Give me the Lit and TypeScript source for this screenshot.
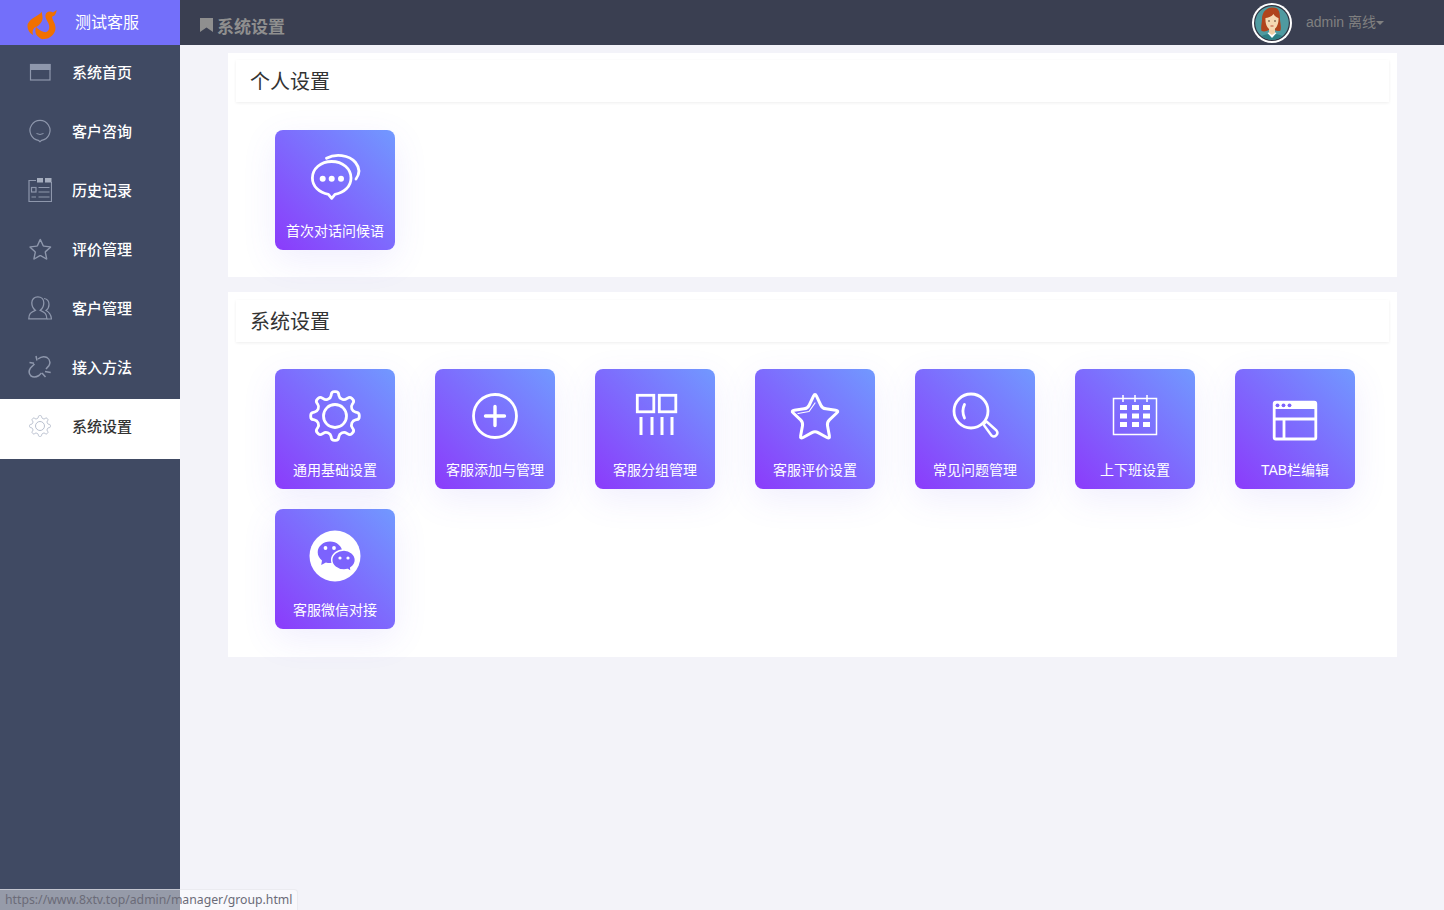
import {LitElement, css, html, svg} from 'lit';
import {customElement} from 'lit/decorators.js';

type Pt = [number, number];

// polygon with rounded corners, r is how far from the corner the curve starts
function roundPoly(pts: Pt[], r: number) {
  let d = '';
  pts.forEach((p, i) => {
    const prev = pts[(i + pts.length - 1) % pts.length];
    const next = pts[(i + 1) % pts.length];
    const toward = (a: Pt, b: Pt): Pt => {
      const len = Math.hypot(b[0] - a[0], b[1] - a[1]);
      const k = Math.min(r, len / 2) / len;
      return [a[0] + (b[0] - a[0]) * k, a[1] + (b[1] - a[1]) * k];
    };
    const s = toward(p, prev);
    const e = toward(p, next);
    d += `${i ? 'L' : 'M'}${s[0].toFixed(2)} ${s[1].toFixed(2)}Q${p[0].toFixed(2)} ${p[1].toFixed(2)} ${e[0].toFixed(2)} ${e[1].toFixed(2)}`;
  });
  return d + 'Z';
}

function gearPath(cx: number, cy: number, outer: number, root: number, teeth: number, r: number) {
  const pts: Pt[] = [];
  const step = (Math.PI * 2) / teeth;
  const at = (a: number, rad: number): Pt => [cx + Math.sin(a) * rad, cy - Math.cos(a) * rad];
  for (let i = 0; i < teeth; i++) {
    const a = i * step;
    pts.push(at(a - step * 0.17, outer), at(a + step * 0.17, outer), at(a + step * 0.3, root), at(a + step * 0.7, root));
  }
  return roundPoly(pts, r);
}

function starPath(cx: number, cy: number, outer: number, inner: number, r: number) {
  const pts: Pt[] = [];
  for (let i = 0; i < 10; i++) {
    const a = (i * Math.PI) / 5;
    const rad = i % 2 ? inner : outer;
    pts.push([cx + Math.sin(a) * rad, cy - Math.cos(a) * rad]);
  }
  return roundPoly(pts, r);
}

const sideIcons = {
  home: svg`<rect x="2.500" y="4.500" width="19.500" height="15.500" fill="none"/><rect x="2" y="4" width="20.500" height="6" fill="currentColor" stroke="none"/>`,
  chat: svg`<path d="M12 22.700l-1.600-1.400a10 10 0 1 1 3.200 0z"/><path d="M8.500 14.500q3.500 2 7 0" stroke-width="1"/>`,
  history: svg`<path d="M8 2.500H1v21h22.500V4"/><rect class="fill" x="9" y="0" width="6" height="4.500"/><rect class="fill" x="17" y="0" width="6.500" height="4.500"/><rect x="3.500" y="9.500" width="4.500" height="4.500"/><path d="M10.500 9.500h11M10.500 14h11M10.500 19h11M3.500 19h4.500"/>`,
  star: svg`<path stroke-width="1.400" d="${starPath(12.300, 13.300, 11, 5.200, 0.4)}"/>`,
  user: svg`<path d="M.8 22.800c0-5 2-6.500 6.500-8.500-2.500-2-3.500-4.500-3.500-7.500C3.800 3.300 6.300.8 9.800.8s6 2.500 6 6c0 3-1 5.500-3.500 7.500 4.500 2 6.500 3.500 6.500 8.500z" stroke-width="1.300"/><path d="M16 2.500c3 .5 5 3 5 6 0 2.500-1 4.500-3 6 3 1.500 5 3.500 5.500 8.500h-4.500"/>`,
  link: svg`<path stroke-width="1.500" d="M10 4c3-2.500 6-3 9-1.500 3 2 3.500 5 2 8l-3 3.500M6.500 9L2.500 13c-2 3-1.500 6 .5 8 2.500 1.500 5.500 1 8-.5l2.500-2.500"/><path stroke-width="1.500" d="M1.500 7.500l4.500.8M8 1l1 4.500M17 16.500l5.700 1M14 18l3.500 4"/>`,
  gear: svg`<path d="${gearPath(12, 12, 10.500, 8, 8, 1)}" stroke-width="1"/><circle cx="12" cy="12" r="4.500" stroke-width="1"/>`,
};

const tileIcons = {
  hello: svg`
    <path d="M26.700 14.500c-11 0-19.300 7.300-19.300 16.500 0 8.500 7 15 16 16.300l3.300 4 3.300-4c9-1.300 16-7.800 16-16.300 0-9.200-8.300-16.500-19.300-16.500z"/>
    <path d="M21.500 11.300C30 6.500 44 7.500 50.500 15.500c4 5 4.500 11 .5 16.500"/>
    <circle class="solid" cx="17.700" cy="31.700" r="3"/><circle class="solid" cx="26.700" cy="31.700" r="3"/><circle class="solid" cx="36" cy="31.700" r="3"/>`,
  gear: svg`<path d="${gearPath(30, 30, 24.500, 18.500, 8, 2.600)}"/><circle cx="30" cy="30" r="11.500"/>`,
  plus: svg`<circle cx="30" cy="30" r="21.500"/><path stroke-width="3.400" d="M20.500 30h19M30 20.500v19"/>`,
  group: svg`
    <g stroke-linecap="butt" stroke-linejoin="miter">
      <rect x="12.300" y="9.300" width="16.500" height="16.500"/><rect x="34.300" y="9.300" width="16.500" height="16.500"/>
      <path stroke-width="3" d="M16 31v18M27 31v18M37 31v18M47 31v18"/>
    </g>`,
  star: svg`
    <path stroke-width="3" d="${starPath(30, 32.500, 25.500, 12.500, 3.500)}"/>
    <path stroke-width="1.200" d="M13 27.500l11-2 6-8.500"/>`,
  search: svg`
    <circle cx="26" cy="25" r="17"/>
    <path d="M19.500 18.500c-2 4-2 9 0 13.500"/>
    <path stroke-width="2.400" d="M38.500 38.500l3-3 10 9a3.500 3.500 0 0 1-.3 4.800 3.500 3.500 0 0 1-4.700.2z"/>`,
  calendar: svg`
    <rect stroke-width="1.500" stroke-linejoin="miter" x="8.500" y="12.500" width="43" height="36"/>
    <path stroke-width="1.500" stroke-linecap="butt" d="M18 9v7M30 9v7M42 9v7"/>
    ${[19, 27.5, 36].map(y => [15, 27, 38].map(x => svg`<rect class="solid" x="${x}" y="${y}" width="7" height="5"/>`))}`,
  tab: svg`
    <rect x="9.200" y="16.200" width="41.600" height="36.800" rx="1.500"/>
    <path class="solid" d="M9 16.500a1.500 1.500 0 0 1 1.500-1.500h39a1.500 1.500 0 0 1 1.500 1.500v6.500H9z"/>
    <circle class="tint" cx="12.500" cy="19.300" r="1.900"/><circle class="tint" cx="18.500" cy="19.300" r="1.900"/><circle class="tint" cx="24.500" cy="19.300" r="1.900"/>
    <path stroke-linecap="butt" d="M9 33h42M19 33v20"/>`,
  wechat: svg`
    <circle class="solid" cx="30" cy="30" r="25.500"/>
    <path class="tint" d="M25 15.500c-6.800 0-12.300 4.800-12.300 10.800 0 3.300 1.700 6.200 4.300 8.200l-.8 4.500 4.700-2.500c1.300.4 2.700.6 4.100.6 6.800 0 12.300-4.800 12.300-10.800S31.800 15.500 25 15.500z"/>
    <circle class="solid" cx="20.500" cy="22" r="1.900"/><circle class="solid" cx="29" cy="22" r="1.900"/>
    <path class="tint-line" d="M39 24c-6.800 0-12.300 4.400-12.300 10s5.500 10 12.300 10c1.200 0 2.400-.1 3.500-.5l3.800 2.300-.6-3.800c2.900-1.900 4.700-4.800 4.700-8 0-5.600-5.600-10-11.400-10z"/>
    <circle class="solid" cx="35" cy="32" r="1.600"/><circle class="solid" cx="43" cy="32" r="1.600"/>`,
};

const menu: {label: string; icon: keyof typeof sideIcons; active?: boolean}[] = [
  {label: '系统首页', icon: 'home'},
  {label: '客户咨询', icon: 'chat'},
  {label: '历史记录', icon: 'history'},
  {label: '评价管理', icon: 'star'},
  {label: '客户管理', icon: 'user'},
  {label: '接入方法', icon: 'link'},
  {label: '系统设置', icon: 'gear', active: true},
];

const personal: {label: string; icon: keyof typeof tileIcons}[] = [
  {label: '首次对话问候语', icon: 'hello'},
];

const system: {label: string; icon: keyof typeof tileIcons}[] = [
  {label: '通用基础设置', icon: 'gear'},
  {label: '客服添加与管理', icon: 'plus'},
  {label: '客服分组管理', icon: 'group'},
  {label: '客服评价设置', icon: 'star'},
  {label: '常见问题管理', icon: 'search'},
  {label: '上下班设置', icon: 'calendar'},
  {label: 'TAB栏编辑', icon: 'tab'},
  {label: '客服微信对接', icon: 'wechat'},
];

@customElement('app-root')
export class AppRoot extends LitElement {
  static styles = css`
    :host {
      display: flex;
      height: 910px;
      overflow: hidden;
      position: relative;
      background: #f3f3f9;
      font-family: 'Liberation Sans', 'Noto Sans CJK SC', sans-serif;
    }
    .side {
      flex: 0 0 180px;
      background: #404a63;
    }
    .brand {
      height: 45px;
      background: #736ffa;
      display: flex;
      align-items: center;
      color: #fff;
      font-size: 16px;
    }
    .brand svg {
      margin: 5px 18px 0 27px;
      flex: none;
      overflow: visible;
    }
    .brand span {
      padding-bottom: 3px;
    }
    .item {
      height: 59px;
      padding: 15px 0 0 28px;
      box-sizing: border-box;
      display: flex;
      gap: 20px;
      color: #fff;
      font-size: 15px;
      font-weight: 500;
      line-height: 26px;
    }
    .item svg {
      width: 24px;
      height: 24px;
      flex: none;
      color: #8e97ac;
      fill: none;
      stroke: currentColor;
      stroke-width: 1.200;
    }
    .item svg .fill {
      fill: #a5adbe;
      stroke: none;
    }
    .item.active {
      height: 60px;
      background: #fff;
      color: #333;
    }
    .item.active svg {
      color: #b9c0cf;
    }
    .body {
      flex: 1;
      min-width: 0;
    }
    .top {
      height: 45px;
      background: #3a3f51;
      display: flex;
      align-items: center;
      color: #8f8f8f;
    }
    .crumb {
      display: flex;
      align-items: center;
      gap: 4px;
      margin: 5px 0 0 20px;
      font-size: 17px;
      font-weight: 700;
    }
    .user {
      margin-left: auto;
      margin-right: 60px;
      display: flex;
      align-items: center;
      gap: 14px;
      font-size: 14px;
      color: #808080;
    }
    .user span {
      padding-bottom: 4px;
    }
    .caret {
      display: inline-block;
      border: 4px solid transparent;
      border-top-color: #808080;
      border-bottom: 0;
      vertical-align: middle;
    }
    .content {
      padding: 8px 47px 0 48px;
      display: flex;
      flex-direction: column;
      gap: 15px;
    }
    .card {
      background: #fff;
      padding: 7px 8px 27px;
    }
    .card.wide {
      padding: 8px 8px 28px;
    }
    .title {
      height: 42px;
      padding-left: 14px;
      color: #333;
      font-size: 20px;
      line-height: 45px;
      box-shadow: 0 1px 3px rgba(0, 0, 0, 0.07);
    }
    .tiles {
      display: flex;
      flex-wrap: wrap;
      gap: 20px 40px;
      padding: 28px 0 0 39px;
    }
    .wide .tiles {
      padding-top: 27px;
    }
    .tile {
      width: 120px;
      height: 120px;
      box-sizing: border-box;
      padding-top: 17px;
      border-radius: 8px;
      background: linear-gradient(45deg, #8b3bfb, #7199ff);
      box-shadow: 0 10px 35px rgba(110, 90, 250, 0.1);
      display: flex;
      flex-direction: column;
      align-items: center;
      color: #fff;
      font-size: 14px;
    }
    .tile svg {
      width: 60px;
      height: 60px;
      fill: none;
      stroke: #fff;
      stroke-width: 2.800;
      stroke-linecap: round;
      stroke-linejoin: round;
    }
    .tile span {
      margin-top: 14px;
      line-height: 20px;
      white-space: nowrap;
    }
    .tile .solid {
      fill: #fff;
      stroke: none;
    }
    .tile .tint {
      fill: #7c63fd;
      stroke: none;
    }
    .tile .tint-line {
      fill: #7c63fd;
      stroke: #fff;
      stroke-width: 1.500;
    }
    .status {
      position: absolute;
      left: 0;
      bottom: 0;
      width: 298px;
      height: 21px;
      box-sizing: border-box;
      padding-left: 5px;
      background: rgba(255, 255, 255, 0.45);
      border: 1px solid rgba(225, 225, 232, 0.6);
      border-width: 1px 1px 0 0;
      border-top-right-radius: 4px;
      color: #6b6b78;
      font: 12.250px/20px 'Noto Sans', sans-serif;
      white-space: nowrap;
    }
  `;

  private logo() {
    return html`<svg width="30" height="30" viewBox="0 0 30 30">
      <path fill="#f07000" d="M14.700 1.700C12 6 4 7 .7 14-.2 18 2 23 6 25c-1-4 0-7 3-8 4-2 7-6 6.500-10z"/>
      <path fill="#f07000" d="M29.700 0L26 2.500C23 .5 19 1.500 18.500 5 18 9 21 11 22 15c1 4-1 8-5 7-4-1-7-4-8-5-1 3-1 7 2 9.500 2 2 4 3 6 2.500 6 0 11.500-5 11.500-11 0-5-3.500-8-3.500-11.500 2 0 4-2 4.700-6.500z"/>
    </svg>`;
  }

  private avatar() {
    return html`<svg width="40" height="40" viewBox="0 0 40 40">
      <defs><clipPath id="av"><circle cx="20" cy="20" r="16.800"/></clipPath></defs>
      <circle cx="20" cy="20" r="20" fill="#fff"/>
      <circle cx="20" cy="20" r="18" fill="#2f3340"/>
      <g clip-path="url(#av)">
        <rect width="40" height="40" fill="#4f9aa0"/>
        <path fill="#2c7f85" d="M7 40c0-7 4-9 13-9s13 2 13 9z"/>
        <path fill="#fff" d="M15.500 30l4.500 5 4.500-5-4.500-2z"/>
        <path fill="#b0441d" d="M21 4.500c-7 0-11 5-11 11.500 0 4-1.500 8-.5 12 3 1 5.500 0 7-1h6c2 1 4.500 1.500 6 .5 1-4-.5-8-.5-11.500C28 9 27 4.500 21 4.500z"/>
        <path fill="#f0cfa6" d="M17 25h6v5l-3 2-3-2z"/>
        <path fill="#f5d8b2" d="M13.500 15c3 0 6-1.500 8-4 1 2 3 3.500 5 4 .5 6-2.500 12-6.500 12s-7-5.500-6.500-12z"/>
        <circle cx="17" cy="18" r=".8" fill="#4a3020"/><circle cx="23" cy="18" r=".8" fill="#4a3020"/>
        <path fill="none" stroke="#c0503a" stroke-width="1" d="M18.500 23h3"/>
      </g>
    </svg>`;
  }

  private tile(t: {label: string; icon: keyof typeof tileIcons}) {
    return html`<div class="tile">
      <svg viewBox="0 0 60 60">${tileIcons[t.icon]}</svg>
      <span>${t.label}</span>
    </div>`;
  }

  render() {
    return html`
      <aside class="side">
        <div class="brand">${this.logo()}<span>测试客服</span></div>
        ${menu.map(m => html`
          <div class="item ${m.active ? 'active' : ''}">
            <svg viewBox="0 0 24 24">${sideIcons[m.icon]}</svg>
            <span>${m.label}</span>
          </div>
        `)}
      </aside>
      <div class="body">
        <header class="top">
          <div class="crumb">
            <svg width="13" height="14" viewBox="0 0 13 14"><path fill="#8f8f8f" d="M0 0h13v14L6.500 9.500 0 14z"/></svg>
            <span>系统设置</span>
          </div>
          <div class="user">
            ${this.avatar()}
            <span>admin 离线<i class="caret"></i></span>
          </div>
        </header>
        <main class="content">
          <section class="card">
            <div class="title">个人设置</div>
            <div class="tiles">${personal.map(t => this.tile(t))}</div>
          </section>
          <section class="card wide">
            <div class="title">系统设置</div>
            <div class="tiles">${system.map(t => this.tile(t))}</div>
          </section>
        </main>
      </div>
      <div class="status">https://www.8xtv.top/admin/manager/group.html</div>
    `;
  }
}
